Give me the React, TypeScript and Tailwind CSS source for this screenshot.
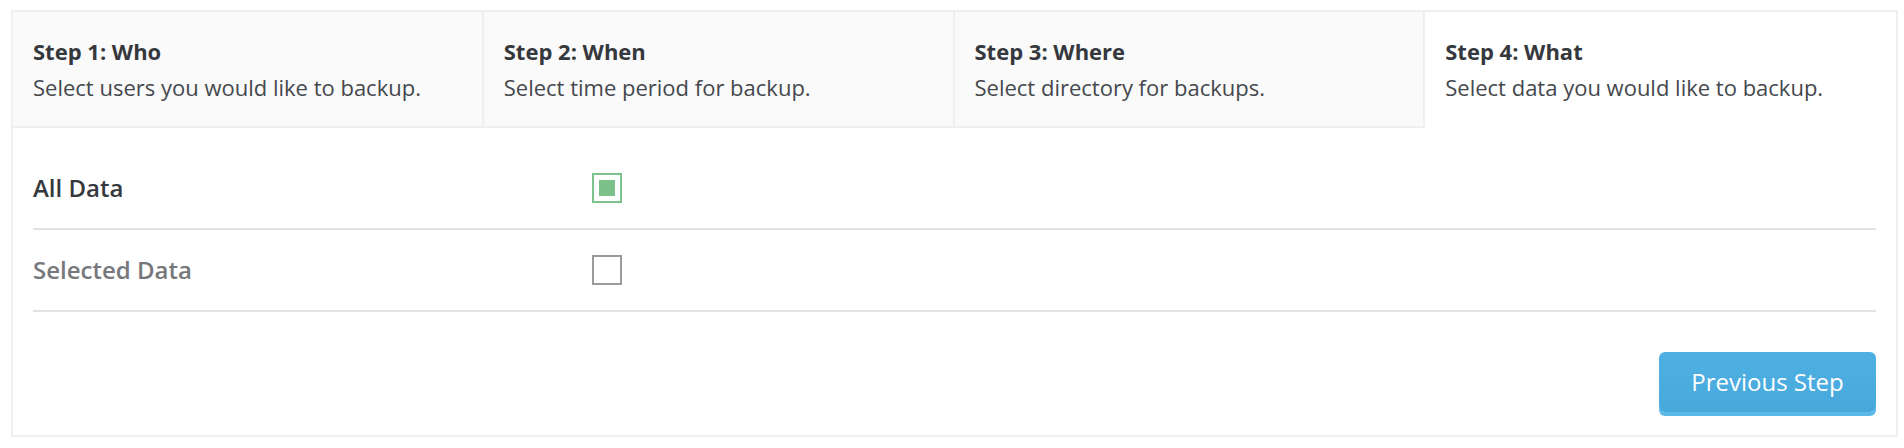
import { useState } from 'react'

const steps = [
  { title: 'Step 1: Who', text: 'Select users you would like to backup.' },
  { title: 'Step 2: When', text: 'Select time period for backup.' },
  { title: 'Step 3: Where', text: 'Select directory for backups.' },
  { title: 'Step 4: What', text: 'Select data you would like to backup.' },
]

const options = ['All Data', 'Selected Data']

export default function App() {
  const [choice, setChoice] = useState(0)
  const active = 3

  return (
    <div className="min-h-screen bg-white pt-[10px] pl-[11px]" style={{ fontFamily: '"Open Sans", sans-serif' }}>
      <div className="w-[1887px] border-2 border-[#efefef] bg-white">
        {/* Steps */}
        <div className="grid grid-cols-4">
          {steps.map((step, i) => (
            <div
              key={step.title}
              className={
                i === active
                  ? 'flex h-[116px] flex-col justify-center bg-white px-5 pb-[2px]'
                  : 'flex h-[116px] flex-col justify-center border-r-2 border-b-2 border-[#efefef] bg-[#fafafa] px-5'
              }
            >
              <div className="text-[22px] leading-[30px] font-bold text-[#35383d]">{step.title}</div>
              <div className="mt-[6px] text-[22px] leading-[30px] text-[#45484d]">{step.text}</div>
            </div>
          ))}
        </div>

        {/* Body */}
        <div className="px-5 pt-5 pb-[23px]">
          {options.map((label, i) => (
            <div
              key={label}
              className="flex h-[82px] items-center border-b-2 border-[#e2e2e2]"
              onClick={() => setChoice(i)}
            >
              <div
                className={
                  choice === i
                    ? 'w-[559px] text-[24px] font-semibold text-[#35383d]'
                    : 'w-[559px] text-[24px] font-semibold text-[#77787b]'
                }
              >
                {label}
              </div>
              <button
                className={
                  choice === i
                    ? 'flex h-[30px] w-[30px] items-center justify-center border-2 border-[#7dc28b] bg-white'
                    : 'flex h-[30px] w-[30px] items-center justify-center border-2 border-[#9a9a9a] bg-white'
                }
              >
                {choice === i && <span className="block h-[16px] w-[16px] bg-[#7cc08a]" />}
              </button>
            </div>
          ))}

          <div className="mt-10 flex justify-end">
            <button className="h-[60px] w-[217px] rounded-[6px] bg-gradient-to-b from-[#4fb0e4] to-[#47a8dc] text-[24px] text-white shadow-[0_4px_0_#5bb9ea]">
              Previous Step
            </button>
          </div>
        </div>
      </div>
    </div>
  )
}
